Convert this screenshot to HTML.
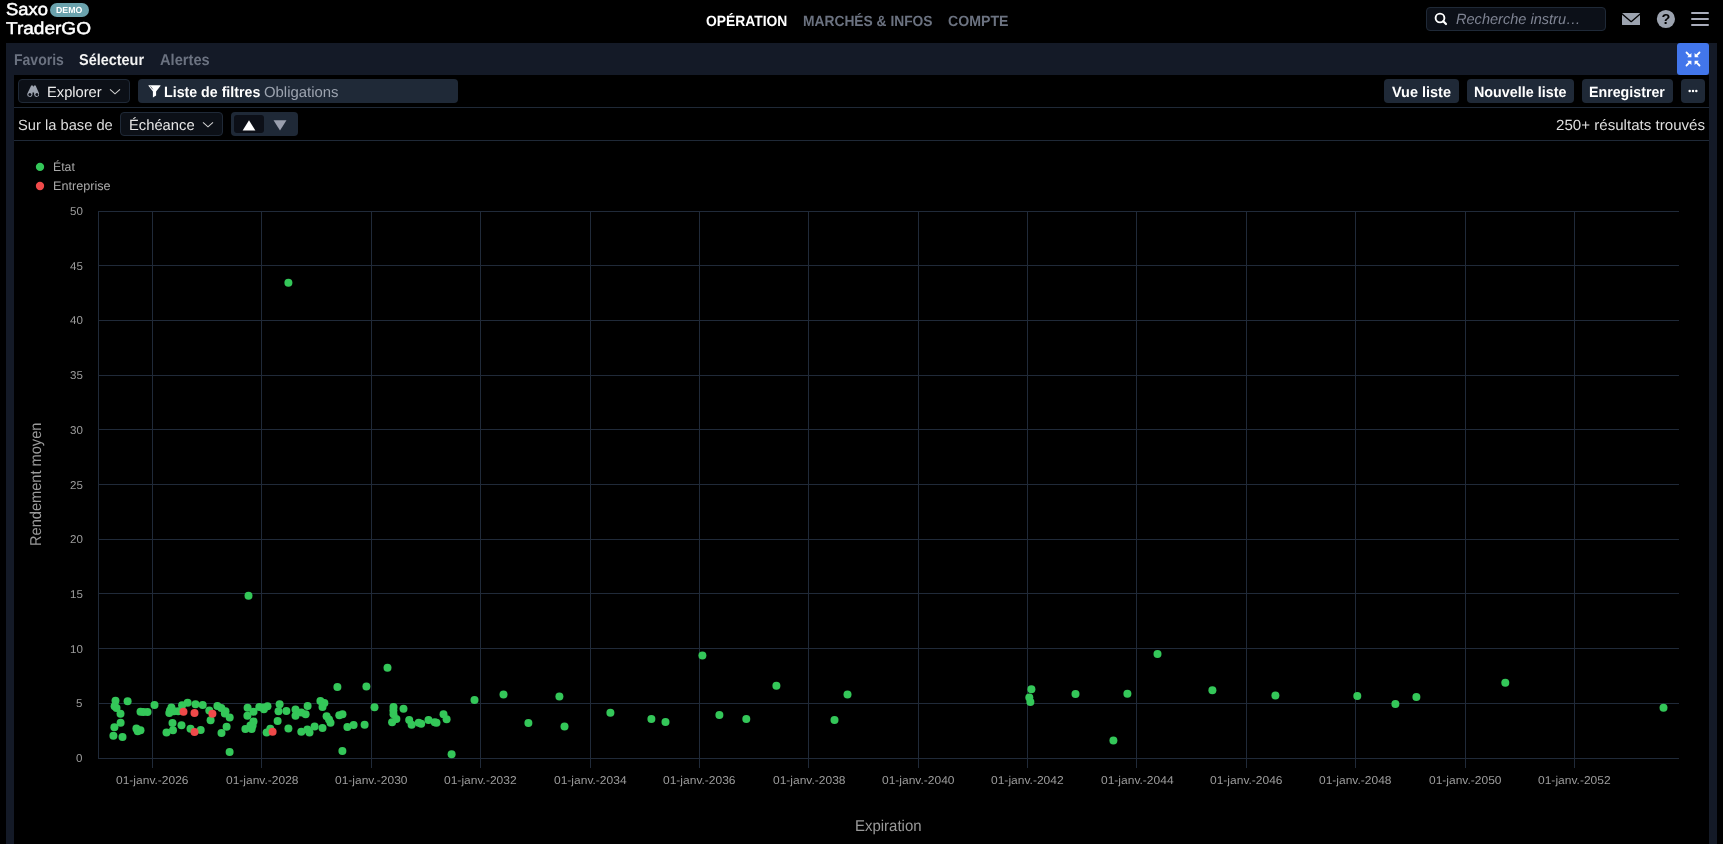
<!DOCTYPE html>
<html lang="fr">
<head>
<meta charset="utf-8">
<title>Saxo TraderGO</title>
<style>
*{box-sizing:border-box;margin:0;padding:0}
html,body{width:1723px;height:844px;overflow:hidden;background:#000}
body{position:relative;font-family:"Liberation Sans",sans-serif;color:#fff}
.abs{position:absolute}
.t{transform-origin:0 50%;position:absolute;white-space:nowrap;line-height:20px;height:20px;text-rendering:geometricPrecision}
.panel{position:absolute;left:6px;top:43px;width:1711px;height:801px;background:#141a27}
.inner{position:absolute;left:14px;top:75px;width:1695px;height:769px;background:#000}
.sep{position:absolute;left:14px;width:1695px;height:1px;background:#1f2937}
.box{position:absolute;border-radius:4px}
.btn{background:#1f2937}
.sel{background:#0c1017;border:1px solid #1f2937}
.chart{position:absolute;left:0;top:0}
.rot{text-rendering:geometricPrecision;position:absolute;white-space:nowrap;line-height:20px;transform-origin:0 0;transform:rotate(-90deg) scaleX(0.931);color:#9a9a9a;font-size:15.7px}
svg{display:block}
#app{position:absolute;left:0;top:0;width:1723px;height:844px;will-change:transform;overflow:hidden}
</style>
</head>
<body>
<div id="app">
<div class="panel"></div>
<div class="inner"></div>
<div class="sep" style="top:107px"></div>
<div class="sep" style="top:140px"></div>

<!-- header -->
<div class="box" style="left:49.8px;top:3.4px;width:39px;height:13.3px;border-radius:7px;background:#6aa2ad"></div>
<div class="box sel" style="left:1426px;top:7px;width:180px;height:24px;border-color:#1f2937;background:#0c1018"></div>
<svg class="abs" style="left:1433px;top:11px" width="16" height="16" viewBox="0 0 16 16"><circle cx="7" cy="7" r="4.4" fill="none" stroke="#fff" stroke-width="1.9"/><line x1="10.3" y1="10.3" x2="13" y2="13" stroke="#fff" stroke-width="2.2" stroke-linecap="round"/></svg>
<svg class="abs" style="left:1621.8px;top:12.7px" width="18.4" height="12.5" viewBox="0 0 18.4 12.5"><rect x="0" y="0" width="18.4" height="12.5" rx="1.2" fill="#9ca3af"/><polyline points="0.2,1.1 9.2,8.7 18.2,1.1" fill="none" stroke="#000" stroke-width="1.3" stroke-linejoin="round" stroke-linecap="round"/></svg>
<svg class="abs" style="left:1656px;top:9px" width="20" height="20" viewBox="0 0 20 20"><circle cx="9.9" cy="10" r="9.1" fill="#9ca3af"/><text x="9.9" y="15.2" text-anchor="middle" font-family="Liberation Sans, sans-serif" font-weight="700" font-size="14.5" fill="#000" style="text-rendering:geometricPrecision">?</text></svg>
<div class="abs" style="left:1691.2px;top:12.05px;width:17.8px;height:2.2px;background:#a9adbb;border-radius:1.1px"></div>
<div class="abs" style="left:1691.2px;top:18.05px;width:17.8px;height:2.2px;background:#a9adbb;border-radius:1.1px"></div>
<div class="abs" style="left:1691.2px;top:24px;width:17.8px;height:2.2px;background:#a9adbb;border-radius:1.1px"></div>

<!-- collapse button -->
<div class="box" style="left:1677px;top:43px;width:32px;height:32px;background:#4276eb;border-radius:3px"></div>
<svg class="abs" style="left:1677px;top:43px" width="32" height="32" viewBox="0 0 32 32">
<g fill="#fff" stroke="#fff" stroke-width="1.8" stroke-linecap="round">
<path d="M9.5 9.5L12.6 12.6M22.5 9.5L19.4 12.6M9.5 22.5L12.6 19.4M22.5 22.5L19.4 19.4"/>
<path stroke="none" d="M14.4 14.2H10.2L14.4 10ZM17.6 14.2H21.8L17.6 10ZM14.4 17.8H10.2L14.4 22ZM17.6 17.8H21.8L17.6 22Z"/>
</g></svg>

<!-- toolbar row 1 -->
<div class="box sel" style="left:18px;top:79px;width:112px;height:24px"></div>
<svg class="abs" style="left:26.6px;top:84.6px" width="12.8" height="12.6" viewBox="0 0 12.8 12.6"><path d="M4.2 0.4h1.6l0.3 1.2h0.6l0.3-1.2h1.6l3.6 8.2a2.6 2.6 0 1 1-5.1 0.9V7.6H5.5v1.9a2.6 2.6 0 1 1-5.1-0.9z" fill="#9ca3af"/><circle cx="2.9" cy="9.5" r="1.5" fill="#0c0f17"/><circle cx="9.9" cy="9.5" r="1.5" fill="#0c0f17"/></svg>
<svg class="abs" style="left:109px;top:88px" width="12" height="7" viewBox="0 0 12 7"><polyline points="1,1.3 6,5.8 11,1.3" fill="none" stroke="#d0d0d0" stroke-width="1.1"/></svg>
<div class="box btn" style="left:138px;top:79px;width:320px;height:24px"></div>
<svg class="abs" style="left:147.8px;top:84.6px" width="13" height="13" viewBox="0 0 13 13"><path d="M0.9 0.3H12.1Q13 0.3 12.4 1.1L8.1 6.4V10.6L4.9 12.5V6.4L0.6 1.1Q0 0.3 0.9 0.3Z" fill="#fff"/><path d="M2.7 1.6L4.6 4" stroke="#1f2937" stroke-width="0.6" stroke-linecap="round"/></svg>
<div class="box btn" style="left:1384px;top:79px;width:75px;height:24px"></div>
<div class="box btn" style="left:1467px;top:79px;width:107px;height:24px"></div>
<div class="box btn" style="left:1582px;top:79px;width:91px;height:24px"></div>
<div class="box btn" style="left:1681px;top:79px;width:24px;height:24px"></div>
<svg class="abs" style="left:1688px;top:88.8px" width="10" height="4" viewBox="0 0 10 4"><circle cx="1.7" cy="2" r="1.25" fill="#fff"/><circle cx="5" cy="2" r="1.25" fill="#fff"/><circle cx="8.3" cy="2" r="1.25" fill="#fff"/></svg>

<!-- toolbar row 2 -->
<div class="box sel" style="left:120px;top:112px;width:103px;height:24px"></div>
<svg class="abs" style="left:202px;top:121.4px" width="12" height="7" viewBox="0 0 12 7"><polyline points="1,1.3 6,5.8 11,1.3" fill="none" stroke="#d0d0d0" stroke-width="1.1"/></svg>
<div class="box btn" style="left:231px;top:112px;width:67px;height:24px"></div>
<div class="box" style="left:234px;top:115px;width:30px;height:18px;background:#0c0f17;border-radius:3px"></div>
<svg class="abs" style="left:242px;top:118.9px" width="14" height="12" viewBox="0 0 14 12"><path d="M7 1.2L13.4 11.4H0.6Z" fill="#fff"/></svg>
<svg class="abs" style="left:272.6px;top:118.7px" width="14" height="12" viewBox="0 0 14 12"><path d="M7 11.5L13.5 1.2H0.5Z" fill="#9a9fae"/></svg>

<svg class="chart" width="1723" height="844" viewBox="0 0 1723 844">
<line x1="98" y1="211.5" x2="1679" y2="211.5" stroke="#202a39"/>
<line x1="98" y1="265.5" x2="1679" y2="265.5" stroke="#202a39"/>
<line x1="98" y1="320.5" x2="1679" y2="320.5" stroke="#202a39"/>
<line x1="98" y1="375.5" x2="1679" y2="375.5" stroke="#202a39"/>
<line x1="98" y1="429.5" x2="1679" y2="429.5" stroke="#202a39"/>
<line x1="98" y1="484.5" x2="1679" y2="484.5" stroke="#202a39"/>
<line x1="98" y1="539.5" x2="1679" y2="539.5" stroke="#202a39"/>
<line x1="98" y1="593.5" x2="1679" y2="593.5" stroke="#202a39"/>
<line x1="98" y1="648.5" x2="1679" y2="648.5" stroke="#202a39"/>
<line x1="98" y1="703.5" x2="1679" y2="703.5" stroke="#202a39"/>
<line x1="98" y1="758.5" x2="1679" y2="758.5" stroke="#202a39"/>
<line x1="152.5" y1="211" x2="152.5" y2="768" stroke="#202a39"/>
<line x1="261.5" y1="211" x2="261.5" y2="768" stroke="#202a39"/>
<line x1="371.5" y1="211" x2="371.5" y2="768" stroke="#202a39"/>
<line x1="480.5" y1="211" x2="480.5" y2="768" stroke="#202a39"/>
<line x1="590.5" y1="211" x2="590.5" y2="768" stroke="#202a39"/>
<line x1="699.5" y1="211" x2="699.5" y2="768" stroke="#202a39"/>
<line x1="808.5" y1="211" x2="808.5" y2="768" stroke="#202a39"/>
<line x1="918.5" y1="211" x2="918.5" y2="768" stroke="#202a39"/>
<line x1="1027.5" y1="211" x2="1027.5" y2="768" stroke="#202a39"/>
<line x1="1136.5" y1="211" x2="1136.5" y2="768" stroke="#202a39"/>
<line x1="1246.5" y1="211" x2="1246.5" y2="768" stroke="#202a39"/>
<line x1="1355.5" y1="211" x2="1355.5" y2="768" stroke="#202a39"/>
<line x1="1465.5" y1="211" x2="1465.5" y2="768" stroke="#202a39"/>
<line x1="1574.5" y1="211" x2="1574.5" y2="768" stroke="#202a39"/>
<line x1="98.5" y1="211" x2="98.5" y2="759" stroke="#202a39"/>
<circle cx="115.5" cy="700.8" r="4.0" fill="#34c759"/>
<circle cx="127.6" cy="701.2" r="4.0" fill="#34c759"/>
<circle cx="114.6" cy="706.2" r="4.0" fill="#34c759"/>
<circle cx="116.5" cy="708.1" r="4.0" fill="#34c759"/>
<circle cx="120.5" cy="713.8" r="4.0" fill="#34c759"/>
<circle cx="120.6" cy="722.7" r="4.0" fill="#34c759"/>
<circle cx="114.4" cy="727.3" r="4.0" fill="#34c759"/>
<circle cx="113.4" cy="735.8" r="4.0" fill="#34c759"/>
<circle cx="122.5" cy="736.9" r="4.0" fill="#34c759"/>
<circle cx="140.5" cy="711.7" r="4.0" fill="#34c759"/>
<circle cx="143.4" cy="711.9" r="4.0" fill="#34c759"/>
<circle cx="147.5" cy="712.0" r="4.0" fill="#34c759"/>
<circle cx="136.4" cy="728.6" r="4.0" fill="#34c759"/>
<circle cx="137.7" cy="731.2" r="4.0" fill="#34c759"/>
<circle cx="140.5" cy="730.2" r="4.0" fill="#34c759"/>
<circle cx="154.5" cy="704.9" r="4.0" fill="#34c759"/>
<circle cx="171.4" cy="707.4" r="4.0" fill="#34c759"/>
<circle cx="170" cy="710.6" r="4.0" fill="#34c759"/>
<circle cx="169.3" cy="713.1" r="4.0" fill="#34c759"/>
<circle cx="173.9" cy="711.3" r="4.0" fill="#34c759"/>
<circle cx="178.2" cy="711.3" r="4.0" fill="#34c759"/>
<circle cx="182.1" cy="705.3" r="4.0" fill="#34c759"/>
<circle cx="187.6" cy="702.8" r="4.0" fill="#34c759"/>
<circle cx="195.5" cy="704.2" r="4.0" fill="#34c759"/>
<circle cx="172.5" cy="723.1" r="4.0" fill="#34c759"/>
<circle cx="181.5" cy="725.3" r="4.0" fill="#34c759"/>
<circle cx="166.5" cy="732.4" r="4.0" fill="#34c759"/>
<circle cx="173.0" cy="730.2" r="4.0" fill="#34c759"/>
<circle cx="190.5" cy="728.7" r="4.0" fill="#34c759"/>
<circle cx="202.7" cy="704.9" r="4.0" fill="#34c759"/>
<circle cx="209.3" cy="710.6" r="4.0" fill="#34c759"/>
<circle cx="217.4" cy="706" r="4.0" fill="#34c759"/>
<circle cx="221.3" cy="708.1" r="4.0" fill="#34c759"/>
<circle cx="225.5" cy="711.3" r="4.0" fill="#34c759"/>
<circle cx="224.8" cy="713.5" r="4.0" fill="#34c759"/>
<circle cx="229.7" cy="717.6" r="4.0" fill="#34c759"/>
<circle cx="210.6" cy="720.3" r="4.0" fill="#34c759"/>
<circle cx="226.6" cy="726.7" r="4.0" fill="#34c759"/>
<circle cx="221.5" cy="733" r="4.0" fill="#34c759"/>
<circle cx="200.7" cy="729.9" r="4.0" fill="#34c759"/>
<circle cx="247.6" cy="707.8" r="4.0" fill="#34c759"/>
<circle cx="253.5" cy="711.7" r="4.0" fill="#34c759"/>
<circle cx="247.4" cy="715.7" r="4.0" fill="#34c759"/>
<circle cx="259.3" cy="707.1" r="4.0" fill="#34c759"/>
<circle cx="263.9" cy="709.2" r="4.0" fill="#34c759"/>
<circle cx="267.5" cy="706.3" r="4.0" fill="#34c759"/>
<circle cx="263.2" cy="707.6" r="4.0" fill="#34c759"/>
<circle cx="279.6" cy="704.2" r="4.0" fill="#34c759"/>
<circle cx="278.5" cy="711.3" r="4.0" fill="#34c759"/>
<circle cx="286.4" cy="711" r="4.0" fill="#34c759"/>
<circle cx="277.6" cy="721.1" r="4.0" fill="#34c759"/>
<circle cx="253.5" cy="721.6" r="4.0" fill="#34c759"/>
<circle cx="250.4" cy="725.5" r="4.0" fill="#34c759"/>
<circle cx="252.6" cy="725.6" r="4.0" fill="#34c759"/>
<circle cx="245.4" cy="729.1" r="4.0" fill="#34c759"/>
<circle cx="251.7" cy="729.1" r="4.0" fill="#34c759"/>
<circle cx="266.6" cy="732.6" r="4.0" fill="#34c759"/>
<circle cx="270.3" cy="728.7" r="4.0" fill="#34c759"/>
<circle cx="288.4" cy="728.4" r="4.0" fill="#34c759"/>
<circle cx="295.5" cy="709.5" r="4.0" fill="#34c759"/>
<circle cx="295.5" cy="715.7" r="4.0" fill="#34c759"/>
<circle cx="301.3" cy="712.4" r="4.0" fill="#34c759"/>
<circle cx="305.6" cy="714.3" r="4.0" fill="#34c759"/>
<circle cx="307.6" cy="706.1" r="4.0" fill="#34c759"/>
<circle cx="320.4" cy="701" r="4.0" fill="#34c759"/>
<circle cx="324.4" cy="703.1" r="4.0" fill="#34c759"/>
<circle cx="322.5" cy="707.1" r="4.0" fill="#34c759"/>
<circle cx="326.6" cy="716.2" r="4.0" fill="#34c759"/>
<circle cx="329" cy="719.5" r="4.0" fill="#34c759"/>
<circle cx="330.5" cy="722.8" r="4.0" fill="#34c759"/>
<circle cx="339.3" cy="715.2" r="4.0" fill="#34c759"/>
<circle cx="342.5" cy="714.2" r="4.0" fill="#34c759"/>
<circle cx="301.3" cy="731.8" r="4.0" fill="#34c759"/>
<circle cx="307.4" cy="729.4" r="4.0" fill="#34c759"/>
<circle cx="309.5" cy="732.6" r="4.0" fill="#34c759"/>
<circle cx="314.6" cy="726.6" r="4.0" fill="#34c759"/>
<circle cx="322.5" cy="728" r="4.0" fill="#34c759"/>
<circle cx="347.4" cy="727" r="4.0" fill="#34c759"/>
<circle cx="353.6" cy="725" r="4.0" fill="#34c759"/>
<circle cx="364.6" cy="724.7" r="4.0" fill="#34c759"/>
<circle cx="374.5" cy="707.2" r="4.0" fill="#34c759"/>
<circle cx="393.5" cy="707.1" r="4.0" fill="#34c759"/>
<circle cx="393.5" cy="714.2" r="4.0" fill="#34c759"/>
<circle cx="393.4" cy="710.6" r="4.0" fill="#34c759"/>
<circle cx="396.4" cy="719.1" r="4.0" fill="#34c759"/>
<circle cx="392.1" cy="722.3" r="4.0" fill="#34c759"/>
<circle cx="403.5" cy="708.8" r="4.0" fill="#34c759"/>
<circle cx="409.2" cy="719.9" r="4.0" fill="#34c759"/>
<circle cx="411.6" cy="724.8" r="4.0" fill="#34c759"/>
<circle cx="418.7" cy="722.8" r="4.0" fill="#34c759"/>
<circle cx="421.2" cy="723.8" r="4.0" fill="#34c759"/>
<circle cx="428.5" cy="719.9" r="4.0" fill="#34c759"/>
<circle cx="434.7" cy="722.3" r="4.0" fill="#34c759"/>
<circle cx="436.5" cy="722.7" r="4.0" fill="#34c759"/>
<circle cx="443.5" cy="714.2" r="4.0" fill="#34c759"/>
<circle cx="446.6" cy="719.2" r="4.0" fill="#34c759"/>
<circle cx="229.6" cy="752" r="4.0" fill="#34c759"/>
<circle cx="342.4" cy="750.9" r="4.0" fill="#34c759"/>
<circle cx="337.4" cy="687" r="4.0" fill="#34c759"/>
<circle cx="366.4" cy="686.4" r="4.0" fill="#34c759"/>
<circle cx="387.5" cy="667.7" r="4.0" fill="#34c759"/>
<circle cx="451.6" cy="754.3" r="4.0" fill="#34c759"/>
<circle cx="474.5" cy="700.1" r="4.0" fill="#34c759"/>
<circle cx="503.5" cy="694.5" r="4.0" fill="#34c759"/>
<circle cx="528.4" cy="722.9" r="4.0" fill="#34c759"/>
<circle cx="559.4" cy="696.5" r="4.0" fill="#34c759"/>
<circle cx="564.5" cy="726.4" r="4.0" fill="#34c759"/>
<circle cx="610.4" cy="712.7" r="4.0" fill="#34c759"/>
<circle cx="651.4" cy="719" r="4.0" fill="#34c759"/>
<circle cx="665.5" cy="722" r="4.0" fill="#34c759"/>
<circle cx="702.4" cy="655.6" r="4.0" fill="#34c759"/>
<circle cx="719.4" cy="715" r="4.0" fill="#34c759"/>
<circle cx="746.3" cy="718.9" r="4.0" fill="#34c759"/>
<circle cx="776.4" cy="685.8" r="4.0" fill="#34c759"/>
<circle cx="847.5" cy="694.5" r="4.0" fill="#34c759"/>
<circle cx="834.5" cy="720.1" r="4.0" fill="#34c759"/>
<circle cx="1031.4" cy="689.3" r="4.0" fill="#34c759"/>
<circle cx="1029.3" cy="697.6" r="4.0" fill="#34c759"/>
<circle cx="1030.4" cy="702.1" r="4.0" fill="#34c759"/>
<circle cx="1075.5" cy="693.9" r="4.0" fill="#34c759"/>
<circle cx="1127.4" cy="693.8" r="4.0" fill="#34c759"/>
<circle cx="1113.4" cy="740.5" r="4.0" fill="#34c759"/>
<circle cx="1157.5" cy="654" r="4.0" fill="#34c759"/>
<circle cx="1212.4" cy="690.2" r="4.0" fill="#34c759"/>
<circle cx="1275.4" cy="695.6" r="4.0" fill="#34c759"/>
<circle cx="1357.3" cy="695.9" r="4.0" fill="#34c759"/>
<circle cx="1395.4" cy="704.1" r="4.0" fill="#34c759"/>
<circle cx="1416.4" cy="697" r="4.0" fill="#34c759"/>
<circle cx="1505.3" cy="682.7" r="4.0" fill="#34c759"/>
<circle cx="1663.5" cy="707.7" r="4.0" fill="#34c759"/>
<circle cx="288.4" cy="282.8" r="4.0" fill="#34c759"/>
<circle cx="248.5" cy="595.8" r="4.0" fill="#34c759"/>
<circle cx="183.5" cy="711.8" r="4.0" fill="#f04a4a"/>
<circle cx="194.5" cy="712.9" r="4.0" fill="#f04a4a"/>
<circle cx="194.5" cy="732.1" r="4.0" fill="#f04a4a"/>
<circle cx="212.4" cy="713.8" r="4.0" fill="#f04a4a"/>
<circle cx="272.6" cy="731.8" r="4.0" fill="#f04a4a"/>
<circle cx="40" cy="166.9" r="4.15" fill="#34c759"/><circle cx="40" cy="186" r="4.15" fill="#f04a4a"/>
</svg>
<div class="rot" style="left:26.9px;top:546px">Rendement moyen</div>
<span class="t" style="left:5.83px;top:-1px;font-size:17.2px;color:#fff;transform:scaleX(1.0684);-webkit-text-stroke:0.5px #fff;">Saxo</span>
<span class="t" style="left:6.25px;top:18px;font-size:17.2px;color:#fff;transform:scaleX(1.1073);-webkit-text-stroke:0.5px #fff;">TraderGO</span>
<span class="t" style="left:56.28px;top:0px;font-size:8.9px;font-weight:700;color:#fff;transform:scaleX(0.9858);">DEMO</span>
<span class="t" style="left:706.23px;top:12px;font-size:14.8px;font-weight:700;color:#fff;transform:scaleX(0.9362);">OPÉRATION</span>
<span class="t" style="left:802.57px;top:12px;font-size:14.8px;font-weight:700;color:#6b7280;transform:scaleX(0.9325);">MARCHÉS &amp; INFOS</span>
<span class="t" style="left:947.93px;top:12px;font-size:14.8px;font-weight:700;color:#6b7280;transform:scaleX(0.9562);">COMPTE</span>
<span class="t" style="left:13.67px;top:51px;font-size:15.6px;font-weight:700;color:#6b7280;transform:scaleX(0.8989);">Favoris</span>
<span class="t" style="left:78.92px;top:51px;font-size:15.6px;font-weight:700;color:#f2f2f2;transform:scaleX(0.9267);">Sélecteur</span>
<span class="t" style="left:159.72px;top:51px;font-size:15.6px;font-weight:700;color:#6b7280;transform:scaleX(0.9406);">Alertes</span>
<span class="t" style="left:46.63px;top:83px;font-size:14.8px;color:#ededed;transform:scaleX(0.9919);">Explorer</span>
<span class="t" style="left:164.04px;top:83px;font-size:14.8px;font-weight:700;color:#fff;transform:scaleX(0.9603);">Liste de filtres</span>
<span class="t" style="left:264.30px;top:83px;font-size:14.8px;color:#9ca3af;transform:scaleX(1.0065);">Obligations</span>
<span class="t" style="left:17.67px;top:116px;font-size:14.8px;color:#dcdcdc;transform:scaleX(0.9932);">Sur la base de</span>
<span class="t" style="left:128.82px;top:116px;font-size:14.8px;color:#e6e6e6;transform:scaleX(0.9968);">Échéance</span>
<span class="t" style="left:1392.19px;top:83px;font-size:14.8px;font-weight:700;color:#fff;transform:scaleX(0.9777);">Vue liste</span>
<span class="t" style="left:1474.03px;top:83px;font-size:14.8px;font-weight:700;color:#fff;transform:scaleX(0.9684);">Nouvelle liste</span>
<span class="t" style="left:1589.24px;top:83px;font-size:14.8px;font-weight:700;color:#fff;transform:scaleX(0.9608);">Enregistrer</span>
<span class="t" style="left:1555.50px;top:116px;font-size:14.8px;color:#dedede;transform:scaleX(1.0208);">250+ résultats trouvés</span>
<span class="t" style="left:1455.52px;top:10px;font-size:14.8px;color:#7f8493;transform:scaleX(0.9837);font-style:italic;">Recherche instru…</span>
<span class="t" style="left:52.70px;top:157px;font-size:12.4px;color:#a9a9a9;transform:scaleX(0.9912);">État</span>
<span class="t" style="left:52.67px;top:176px;font-size:12.4px;color:#a9a9a9;transform:scaleX(1.0197);">Entreprise</span>
<span class="t" style="left:855.12px;top:817px;font-size:15.7px;color:#9a9a9a;transform:scaleX(0.9540);">Expiration</span>
<span class="t" style="left:70.08px;top:202px;font-size:11.4px;color:#9c9c9c;transform:scaleX(1.0150);">50</span>
<span class="t" style="left:70.12px;top:257px;font-size:11.4px;color:#9c9c9c;transform:scaleX(1.0150);">45</span>
<span class="t" style="left:70.08px;top:311px;font-size:11.4px;color:#9c9c9c;transform:scaleX(1.0150);">40</span>
<span class="t" style="left:70.12px;top:366px;font-size:11.4px;color:#9c9c9c;transform:scaleX(1.0150);">35</span>
<span class="t" style="left:70.08px;top:421px;font-size:11.4px;color:#9c9c9c;transform:scaleX(1.0150);">30</span>
<span class="t" style="left:70.12px;top:476px;font-size:11.4px;color:#9c9c9c;transform:scaleX(1.0150);">25</span>
<span class="t" style="left:70.08px;top:530px;font-size:11.4px;color:#9c9c9c;transform:scaleX(1.0150);">20</span>
<span class="t" style="left:70.12px;top:585px;font-size:11.4px;color:#9c9c9c;transform:scaleX(1.0150);">15</span>
<span class="t" style="left:70.08px;top:640px;font-size:11.4px;color:#9c9c9c;transform:scaleX(1.0150);">10</span>
<span class="t" style="left:76.47px;top:694px;font-size:11.4px;color:#9c9c9c;transform:scaleX(1.0150);">5</span>
<span class="t" style="left:76.45px;top:749px;font-size:11.4px;color:#9c9c9c;transform:scaleX(1.0150);">0</span>
<span class="t" style="left:116.25px;top:771px;font-size:11.4px;color:#9c9c9c;transform:scaleX(1.0543);">01-janv.-2026</span>
<span class="t" style="left:225.63px;top:771px;font-size:11.4px;color:#9c9c9c;transform:scaleX(1.0540);">01-janv.-2028</span>
<span class="t" style="left:335.01px;top:771px;font-size:11.4px;color:#9c9c9c;transform:scaleX(1.0533);">01-janv.-2030</span>
<span class="t" style="left:444.39px;top:771px;font-size:11.4px;color:#9c9c9c;transform:scaleX(1.0556);">01-janv.-2032</span>
<span class="t" style="left:553.77px;top:771px;font-size:11.4px;color:#9c9c9c;transform:scaleX(1.0547);">01-janv.-2034</span>
<span class="t" style="left:663.15px;top:771px;font-size:11.4px;color:#9c9c9c;transform:scaleX(1.0543);">01-janv.-2036</span>
<span class="t" style="left:772.53px;top:771px;font-size:11.4px;color:#9c9c9c;transform:scaleX(1.0540);">01-janv.-2038</span>
<span class="t" style="left:881.91px;top:771px;font-size:11.4px;color:#9c9c9c;transform:scaleX(1.0533);">01-janv.-2040</span>
<span class="t" style="left:991.29px;top:771px;font-size:11.4px;color:#9c9c9c;transform:scaleX(1.0556);">01-janv.-2042</span>
<span class="t" style="left:1100.67px;top:771px;font-size:11.4px;color:#9c9c9c;transform:scaleX(1.0547);">01-janv.-2044</span>
<span class="t" style="left:1210.05px;top:771px;font-size:11.4px;color:#9c9c9c;transform:scaleX(1.0543);">01-janv.-2046</span>
<span class="t" style="left:1319.43px;top:771px;font-size:11.4px;color:#9c9c9c;transform:scaleX(1.0540);">01-janv.-2048</span>
<span class="t" style="left:1428.81px;top:771px;font-size:11.4px;color:#9c9c9c;transform:scaleX(1.0533);">01-janv.-2050</span>
<span class="t" style="left:1538.19px;top:771px;font-size:11.4px;color:#9c9c9c;transform:scaleX(1.0556);">01-janv.-2052</span>
</div>
</body>
</html>
